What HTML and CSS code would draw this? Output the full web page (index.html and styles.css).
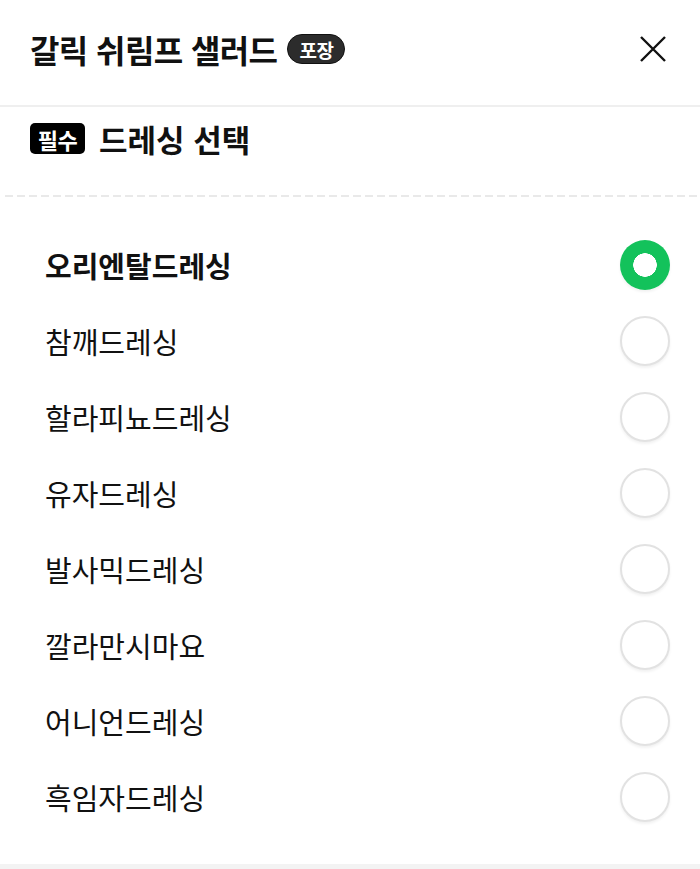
FILE: index.html
```html
<!DOCTYPE html>
<html lang="ko">
<head>
<meta charset="utf-8">
<link rel="stylesheet" href="styles.css">
</head>
<body>
<div class="sheet">
  <header class="header">
    <div class="title-wrap">
      <h1 class="title">갈릭 쉬림프 샐러드</h1>
      <span class="pack-badge">포장</span>
    </div>
    <button class="close" aria-label="닫기">
      <svg width="26" height="26" viewBox="0 0 26 26"><path d="M1 1 L25 25 M25 1 L1 25" stroke="#111" stroke-width="2.4" fill="none"/></svg>
    </button>
  </header>
  <section class="group">
    <div class="group-title">
      <span class="req-badge">필수</span>
      <h2 class="group-name">드레싱 선택</h2>
    </div>
    <div class="dash"></div>
    <ul class="options">
      <li class="option selected"><span class="label">오리엔탈드레싱</span><span class="radio"></span></li>
      <li class="option"><span class="label">참깨드레싱</span><span class="radio"></span></li>
      <li class="option"><span class="label">할라피뇨드레싱</span><span class="radio"></span></li>
      <li class="option"><span class="label">유자드레싱</span><span class="radio"></span></li>
      <li class="option"><span class="label">발사믹드레싱</span><span class="radio"></span></li>
      <li class="option"><span class="label">깔라만시마요</span><span class="radio"></span></li>
      <li class="option"><span class="label">어니언드레싱</span><span class="radio"></span></li>
      <li class="option"><span class="label">흑임자드레싱</span><span class="radio"></span></li>
    </ul>
  </section>
  <div class="bottom-band"></div>
</div>
</body>
</html>
```

FILE: styles.css
```css
* { box-sizing: border-box; }
html, body { margin: 0; padding: 0; background: #fff; }
body {
  font-family: "Noto Sans CJK KR", "Noto Sans", sans-serif;
  color: #111;
  width: 700px;
  height: 869px;
  overflow: hidden;
}
.header {
  height: 107px;
  padding: 0 34px 7px 30px;
  display: flex;
  align-items: center;
  justify-content: space-between;
  border-bottom: 2px solid #efefef;
}
.title-wrap { display: flex; align-items: center; gap: 10px; }
.title {
  margin: 0;
  font-size: 32px;
  font-weight: 700;
  letter-spacing: -0.6px;
  line-height: 1;
}
.pack-badge {
  display: inline-flex;
  align-items: center;
  justify-content: center;
  width: 58px;
  height: 30px;
  border-radius: 15px;
  background: #2c2c2c;
  border: 1.5px solid #111;
  color: #fff;
  font-size: 19px;
  font-weight: 700;
  letter-spacing: -0.5px;
  line-height: 1;
}
.close {
  border: 0;
  background: none;
  padding: 0;
  width: 26px;
  height: 26px;
  display: flex;
}
.group-title {
  display: flex;
  align-items: center;
  gap: 14px;
  padding: 16px 30px 0;
  height: 47px;
}
.req-badge {
  display: inline-flex;
  align-items: center;
  justify-content: center;
  width: 55px;
  height: 31px;
  border-radius: 5px;
  background: #000;
  color: #fff;
  font-size: 22px;
  font-weight: 700;
  letter-spacing: -0.5px;
  line-height: 1;
}
.group-name {
  margin: 0;
  font-size: 31px;
  font-weight: 700;
  line-height: 1;
  letter-spacing: 0;
}
.dash {
  margin: 41px 0 0 5px;
  height: 2px;
  background: repeating-linear-gradient(90deg, #e9e9e9 0 8px, transparent 8px 12px);
}
.options {
  list-style: none;
  margin: 0;
  padding: 30px 0 0;
}
.option {
  height: 76px;
  display: flex;
  align-items: center;
  justify-content: space-between;
  padding: 0 30px 0 45px;
}
.label {
  font-size: 29px;
  font-weight: 400;
  letter-spacing: 0;
  line-height: 1;
}
.selected .label { font-weight: 700; }
.radio {
  width: 50px;
  height: 50px;
  border-radius: 50%;
  border: 2px solid #e2e2e2;
  background: #fff;
  box-shadow: 0 2px 3px rgba(0,0,0,0.06);
}
.selected .radio {
  border: 0;
  background: radial-gradient(circle, #fff 0 11.5px, #13c25b 12px);
  box-shadow: 0 2px 3px rgba(0,0,0,0.06);
}
.bottom-band {
  margin-top: 29px;
  height: 10px;
  background: #f3f3f3;
}
```
